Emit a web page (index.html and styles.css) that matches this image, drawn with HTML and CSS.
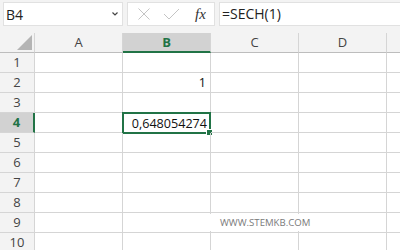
FILE: index.html
```html
<!DOCTYPE html>
<html>
<head>
  <meta charset="UTF-8">
  <title>SECH</title>
  <link rel="stylesheet" href="styles.css">
</head>
<body>
  <div class="app">
    <!-- formula bar -->
    <div class="topbar">
      <div class="namebox">
        <span>B4</span>
        <svg class="chev" width="8" height="6" viewBox="0 0 8 6"><path d="M1.5 1.5 L4 4 L6.5 1.5" fill="none" stroke="#444" stroke-width="1.2"/></svg>
      </div>
      <div class="fxbox">
        <svg width="14" height="14" viewBox="0 0 14 14"><path d="M1.5 1.5 L12.5 12.5 M12.5 1.5 L1.5 12.5" stroke="#c4c4c4" stroke-width="1"/></svg>
        <svg class="check" width="17" height="14" viewBox="0 0 17 14"><path d="M1 7 L6 12 L16 2" fill="none" stroke="#c4c4c4" stroke-width="1"/></svg>
        <span class="fx">fx</span>
      </div>
      <div class="formula">=SECH(1)</div>
    </div>

    <!-- grid -->
    <div class="sheet">
      <div class="corner"><span class="tri"></span></div>
      <div class="colhead">A</div>
      <div class="colhead active">B</div>
      <div class="colhead">C</div>
      <div class="colhead">D</div>
      <div class="colhead last"></div>

      <div class="rowhead">1</div><div class="cell"></div><div class="cell"></div><div class="cell"></div><div class="cell"></div><div class="cell last"></div>
      <div class="rowhead">2</div><div class="cell"></div><div class="cell num">1</div><div class="cell"></div><div class="cell"></div><div class="cell last"></div>
      <div class="rowhead">3</div><div class="cell"></div><div class="cell"></div><div class="cell"></div><div class="cell"></div><div class="cell last"></div>
      <div class="rowhead active">4</div><div class="cell"></div><div class="cell num selected">0,648054274<span class="handle"></span></div><div class="cell"></div><div class="cell"></div><div class="cell last"></div>
      <div class="rowhead">5</div><div class="cell"></div><div class="cell"></div><div class="cell"></div><div class="cell"></div><div class="cell last"></div>
      <div class="rowhead">6</div><div class="cell"></div><div class="cell"></div><div class="cell"></div><div class="cell"></div><div class="cell last"></div>
      <div class="rowhead">7</div><div class="cell"></div><div class="cell"></div><div class="cell"></div><div class="cell"></div><div class="cell last"></div>
      <div class="rowhead">8</div><div class="cell"></div><div class="cell"></div><div class="cell"></div><div class="cell"></div><div class="cell last"></div>
      <div class="rowhead">9</div><div class="cell"></div><div class="cell"></div><div class="cell"><span class="watermark">WWW.STEMKB.COM</span></div><div class="cell"></div><div class="cell last"></div>
      <div class="rowhead">10</div><div class="cell"></div><div class="cell"></div><div class="cell"></div><div class="cell"></div><div class="cell last"></div>
    </div>
  </div>
</body>
</html>
```
FILE: styles.css
```css
body{
  margin: 0;
  font-family: "Open Sans", "Noto Sans", sans-serif;
  background: #fff;
}

.app{
  width: 400px;
  height: 250px;
  overflow: hidden;
}

/* formula bar */
.topbar{
  display: flex;
  height: 33px;
  box-sizing: border-box;
  padding: 2px 0 0 3px;
  background: #f3f3f3;
  gap: 4px;
}

.namebox{
  box-sizing: border-box;
  width: 120px;
  height: 24px;
  background: #fff;
  border: 1px solid #e1e1e1;
  display: flex;
  align-items: center;
  justify-content: space-between;
  padding: 0 3px 0 2px;
  font-size: 14px;
  color: #222;
}

.fxbox{
  box-sizing: border-box;
  width: 88px;
  height: 24px;
  background: #fff;
  border: 1px solid #e1e1e1;
  display: flex;
  align-items: center;
  gap: 12px;
  padding-left: 9px;
}

.fx{
  font-family: "Liberation Serif", serif;
  font-style: italic;
  font-size: 15px;
  color: #333;
  margin-left: 3px;
}

.formula{
  flex: 1;
  box-sizing: border-box;
  height: 24px;
  background: #fff;
  border: 1px solid #e1e1e1;
  border-right: 0;
  padding-left: 2px;
  font-size: 14px;
  line-height: 22px;
  color: #222;
}

/* sheet */
.sheet{
  display: grid;
  grid-template-columns: 35px 88px 88px 88px 88px 1fr;
  grid-auto-rows: 20px;
  font-size: 12.6px;
}

.corner, .colhead, .rowhead{
  background: #f3f3f3;
  box-sizing: border-box;
  color: #444;
  font-size: 13px;
}

.corner{
  border-right: 1px solid #d5d5d5;
  border-bottom: 1px solid #bdbdbd;
  position: relative;
}

.tri{
  position: absolute;
  right: 2px;
  bottom: 2px;
  width: 0;
  height: 0;
  border-left: 15px solid transparent;
  border-bottom: 15px solid #b4b4b4;
}

.colhead{
  border-right: 1px solid #d5d5d5;
  border-bottom: 1px solid #bdbdbd;
  text-align: center;
  line-height: 19px;
}

.colhead.last{
  border-right: 0;
}

.colhead.active{
  background: #d2d2d2;
  color: #217346;
  font-weight: bold;
  border-bottom: 2px solid #217346;
}

.rowhead{
  border-right: 1px solid #d5d5d5;
  border-bottom: 1px solid #d5d5d5;
  text-align: center;
  line-height: 19px;
}

.rowhead.active{
  background: #d2d2d2;
  color: #217346;
  font-weight: bold;
  border-right: 2px solid #217346;
}

.cell{
  box-sizing: border-box;
  border-right: 1px solid #d5d5d5;
  border-bottom: 1px solid #d5d5d5;
  line-height: 19px;
  padding: 0 4px;
  color: #111;
  position: relative;
}

.cell.last{
  border-right: 0;
}

.num{
  text-align: right;
}

.selected{
  border: 2px solid #217346;
  margin: -1px 0 -1px -1px;
  padding-right: 2px;
  line-height: 19px;
}

.handle{
  position: absolute;
  right: -4px;
  bottom: -4px;
  width: 5px;
  height: 5px;
  background: #217346;
  border: 1px solid #fff;
}

.watermark{
  position: absolute;
  left: -1px;
  top: 1px;
  width: 104px;
  height: 17px;
  background: #fff;
  padding-left: 10px;
  box-sizing: border-box;
  font-size: 9.6px;
  line-height: 17px;
  color: #7a7a7a;
  z-index: 1;
}
```
